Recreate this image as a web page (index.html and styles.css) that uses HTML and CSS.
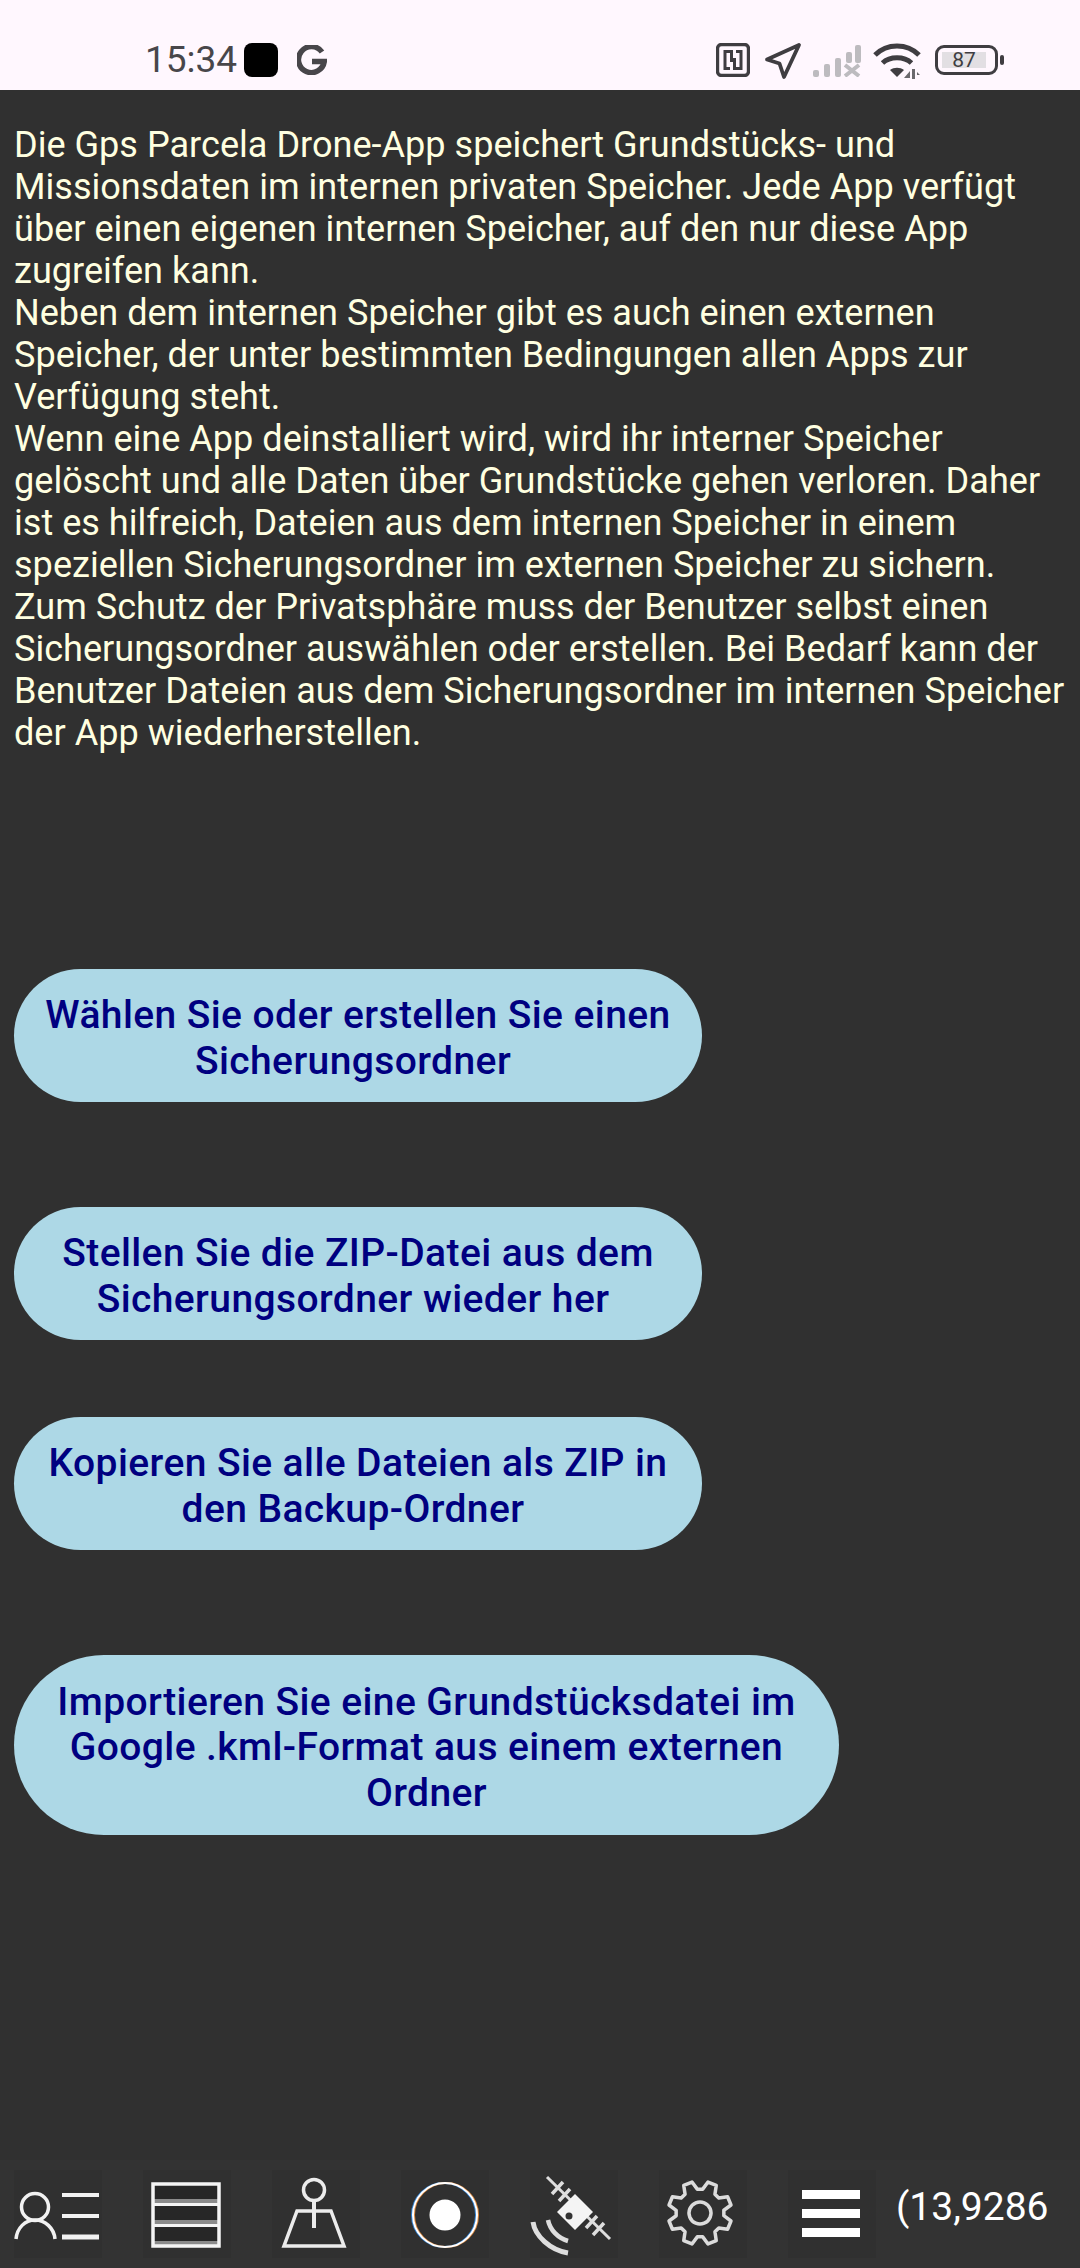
FILE: index.html
```html
<!DOCTYPE html>
<html lang="en">
<head>
    <meta charset="UTF-8">
    <title>Gps Parcela Drone</title>
    <link rel="stylesheet" href="styles.css">
</head>
<body>
    <div class="status-bar">
        <span class="time">15:34</span>
        <span class="black-square"></span>
        <svg class="icon-g" viewBox="0 0 30 30"><path d="M25 7A13 13 0 1 0 27.300 16.500H15" fill="none" stroke="#48464a" stroke-width="5.500"/></svg>
        <div class="status-right">
            <svg class="icon-nfc" viewBox="0 0 34 34" fill="none" stroke="#3f3d41" stroke-width="3"><rect x="1.500" y="1.500" width="31" height="31" rx="4" stroke-width="3.400"/><path d="M14 25.500H9V8.500H15.500V19"/><path d="M20 8.500H25V25.500H18.500V15"/></svg>
            <svg class="icon-arrow" viewBox="0 0 38 38"><path d="M35 3L3 17.500L15.500 21.500L20 35Z" fill="none" stroke="#3f3d41" stroke-width="3.800" stroke-linejoin="round"/></svg>
            <svg class="icon-signal" viewBox="0 0 48 32"><g fill="#bdbbbf"><rect x="0" y="25" width="6" height="7" rx="2"/><rect x="11" y="19" width="6" height="13" rx="2"/><rect x="22" y="13" width="6" height="19" rx="2"/><rect x="33" y="7" width="6" height="11" rx="2"/><rect x="42" y="0" width="6" height="18" rx="2"/></g><path d="M32 20L46 31M46 20L32 31" stroke="#bdbbbf" stroke-width="4"/></svg>
            <svg class="icon-wifi" viewBox="0 0 48 36"><g fill="none" stroke="#3f3d41" stroke-width="5"><path d="M2 12C14 0 34 0 46 12"/><path d="M9.500 20C17 13 31 13 38.500 20"/></g><path d="M17 27C21 24 27 24 31 27L24 34Z" fill="#3f3d41"/><path d="M31 35L37 28V35ZM39 26H42V36H39ZM44 29L47 32L44 32Z" fill="#6b696d"/></svg>
            <div class="battery"><span class="battery-level">87</span></div>
            <span class="battery-nub"></span>
        </div>
    </div>

    <div class="content">
        <p class="info">Die Gps Parcela Drone-App speichert Grundstücks- und Missionsdaten im internen privaten Speicher. Jede App verfügt über einen eigenen internen Speicher, auf den nur diese App zugreifen kann.<br>Neben dem internen Speicher gibt es auch einen externen Speicher, der unter bestimmten Bedingungen allen Apps zur Verfügung steht.<br>Wenn eine App deinstalliert wird, wird ihr interner Speicher gelöscht und alle Daten über Grundstücke gehen verloren. Daher ist es hilfreich, Dateien aus dem internen Speicher in einem speziellen Sicherungsordner im externen Speicher zu sichern.<br>Zum Schutz der Privatsphäre muss der Benutzer selbst einen Sicherungsordner auswählen oder erstellen. Bei Bedarf kann der Benutzer Dateien aus dem Sicherungsordner im internen Speicher der App wiederherstellen.</p>

        <button class="pill pill-first">Wählen Sie oder erstellen Sie einen <span class="last-line">Sicherungsordner</span></button>
        <button class="pill pill-far">Stellen Sie die ZIP-Datei aus dem <span class="last-line">Sicherungsordner wieder her</span></button>
        <button class="pill pill-near">Kopieren Sie alle Dateien als ZIP in <span class="last-line">den Backup-Ordner</span></button>
        <button class="pill pill-far pill-wide">Importieren Sie eine Grundstücksdatei im Google .kml-Format aus einem externen Ordner</button>
    </div>

    <div class="nav">
        <div class="tile">
            <svg viewBox="0 0 88 88" fill="none" stroke="#f2f2f2" stroke-width="3.500"><circle cx="21" cy="37" r="13.500"/><path d="M2 69C3 58 11 50 21 50C31 50 40 58 41 69"/><path d="M48 25H85M48 46H85" stroke-width="4"/><path d="M48 67H85" stroke-width="5"/></svg>
        </div>
        <div class="tile">
            <svg viewBox="0 0 88 88" fill="none"><rect x="10" y="14" width="66" height="62" fill="#272727"/><path d="M11 31H75M11 52H75M11 73H75" stroke="#8b8b8b" stroke-width="4"/><rect x="10" y="14" width="66" height="62" stroke="#f4f4f4" stroke-width="3.500"/><path d="M10 34.500H76M10 55.500H76" stroke="#f4f4f4" stroke-width="3"/></svg>
        </div>
        <div class="tile">
            <svg viewBox="0 0 88 88" fill="none" stroke="#ececec" stroke-width="3.500"><circle cx="42" cy="20" r="10.500"/><path d="M42 30V58" stroke-width="4"/><path d="M25 41H59L72 76H12Z"/></svg>
        </div>
        <div class="tile">
            <svg viewBox="0 0 88 88" fill="none" stroke-width="2"><circle cx="43" cy="45" r="32" stroke="#2f7fd0"/><circle cx="45" cy="45" r="32" stroke="#d9853a"/><circle cx="44" cy="45" r="32" stroke="#ffffff"/><circle cx="44" cy="45" r="15.500" fill="#ffffff" stroke="none"/></svg>
        </div>
        <div class="tile">
            <svg viewBox="0 0 88 88" fill="none" stroke="#dedede"><path d="M17 7L80 69" stroke-width="3"/><path d="M22 24L33 12M29 31L40 19M63 65L74 53M56 58L67 46" stroke-width="3.500"/><path d="M45 24L63 42L45 60L27 42Z" fill="#f4f4f4" stroke="none"/><circle cx="39" cy="46" r="3.500" fill="#333333" stroke="none"/><path d="M3 52C5 66 20 80 38 83" stroke-width="5"/><path d="M18 50C20 60 28 68 38 71" stroke-width="4.500"/></svg>
        </div>
        <div class="tile">
            <svg viewBox="0 0 88 88" fill="none" stroke="#dcdcdc"><g transform="translate(41 43) rotate(22.500)"><path d="M23.070-6.620L31.690-4.450V4.450L23.070 6.620L20.990 11.640L25.560 19.260L19.260 25.560L11.640 20.990L6.620 23.070L4.450 31.690H-4.450L-6.620 23.070L-11.640 20.990L-19.260 25.560L-25.560 19.260L-20.990 11.640L-23.070 6.620L-31.690 4.450V-4.450L-23.070-6.620L-20.990-11.640L-25.560-19.260L-19.260-25.560L-11.640-20.990L-6.620-23.070L-4.450-31.690H4.450L6.620-23.070L11.640-20.990L19.260-25.560L25.560-19.260L20.990-11.640Z" stroke-width="3.500" stroke-linejoin="round"/><circle r="11" stroke-width="3.500"/></g></svg>
        </div>
        <div class="tile">
            <svg viewBox="0 0 88 88" fill="#ffffff"><rect x="14" y="20" width="58" height="9"/><rect x="14" y="39" width="58" height="9"/><rect x="14" y="58" width="58" height="9"/></svg>
        </div>
        <span class="coords">(13,9286</span>
    </div>
</body>
</html>
```

FILE: styles.css
```css
html, body {
    margin: 0;
    padding: 0;
}

body {
    width: 1080px;
    height: 2268px;
    overflow: hidden;
    display: flex;
    flex-direction: column;
    background-color: #303030;
    font-family: Roboto, sans-serif;
}

.status-bar {
    height: 90px;
    flex: none;
    display: flex;
    align-items: flex-start;
    background-color: #fff7fe;
    padding-left: 145px;
    box-sizing: border-box;
}

.time {
    margin-top: 40px;
    font-size: 37px;
    line-height: 40px;
    color: #48464a;
}

.black-square {
    width: 34px;
    height: 34px;
    margin: 43px 0 0 7px;
    border-radius: 8px;
    background-color: #000;
}

.icon-g {
    width: 30px;
    height: 30px;
    margin: 45px 0 0 19px;
}

.status-right {
    margin-left: auto;
    display: flex;
    align-items: flex-start;
    padding-right: 76px;
}

.icon-nfc {
    width: 34px;
    height: 34px;
    margin-top: 43px;
}

.icon-arrow {
    width: 38px;
    height: 38px;
    margin: 42px 0 0 14px;
}

.icon-signal {
    width: 48px;
    height: 32px;
    margin: 45px 0 0 11px;
}

.icon-wifi {
    width: 48px;
    height: 36px;
    margin: 43px 0 0 12px;
}

.battery {
    width: 63px;
    height: 30px;
    margin: 45px 0 0 14px;
    box-sizing: border-box;
    border: 3px solid #3f3d41;
    border-radius: 9px;
    padding: 4px;
    display: flex;
}

.battery-level {
    width: 44px;
    background-color: #e2dfe3;
    color: #3f3d41;
    font-size: 21px;
    line-height: 16px;
    text-align: center;
}

.battery-nub {
    width: 4px;
    height: 10px;
    margin: 55px 0 0 2px;
    border-radius: 2px;
    background-color: #3f3d41;
}

.content {
    flex: 1;
    padding: 0 14px;
}

.info {
    margin: 34px 0 0;
    font-size: 36.100px;
    line-height: 42px;
    color: #ffffe0;
}

.pill {
    display: block;
    width: 688px;
    height: 133px;
    border: none;
    border-radius: 90px;
    background-color: #add8e6;
    color: #000080;
    font-family: Roboto, sans-serif;
    font-size: 39px;
    font-weight: 500;
    letter-spacing: 0.4px;
    line-height: 45.600px;
    padding: 6px 24px 0;
}

.last-line {
    display: block;
    margin-right: 10px;
}

.pill-first {
    margin-top: 215px;
}

.pill-far {
    margin-top: 105px;
}

.pill-near {
    margin-top: 77px;
}

.pill-wide {
    width: 825px;
    height: 180px;
}

.nav {
    height: 108px;
    flex: none;
    display: flex;
    gap: 41px;
    padding: 10px 0 0 14px;
    box-sizing: border-box;
    background-color: #333333;
}

.tile {
    width: 88px;
    height: 88px;
    background-color: #303030;
}

.tile svg {
    display: block;
    width: 88px;
    height: 88px;
    filter: blur(0.6px);
}

.coords {
    margin: 15px 0 0 -21px;
    font-size: 39px;
    line-height: 44px;
    color: #ffffff;
}
```
